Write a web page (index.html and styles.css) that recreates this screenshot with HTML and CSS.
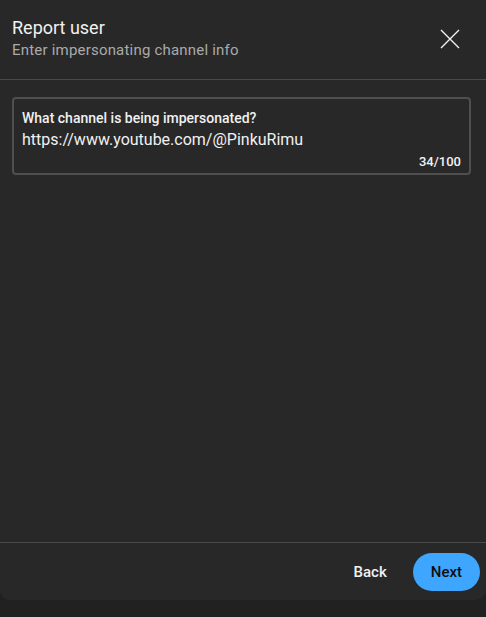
FILE: index.html
```html
<!DOCTYPE html>
<html>
<head>
<meta charset="utf-8">
<link rel="stylesheet" href="styles.css">
</head>
<body>
<div class="dialog">
  <div class="header">
    <div class="titles">
      <div class="title">Report user</div>
      <div class="subtitle">Enter impersonating channel info</div>
    </div>
    <button class="close" aria-label="Close">
      <svg width="20" height="20" viewBox="0 0 20 20"><path d="M1 1 L19 19 M19 1 L1 19" stroke="#f1f1f1" stroke-width="1.4" fill="none"/></svg>
    </button>
  </div>
  <div class="body">
    <div class="field">
      <div class="label">What channel is being impersonated?</div>
      <div class="value">https://www.youtube.com/@PinkuRimu</div>
      <div class="counter">34/100</div>
    </div>
  </div>
  <div class="footer">
    <button class="btn back">Back</button>
    <button class="btn next">Next</button>
  </div>
</div>
</body>
</html>
```
FILE: styles.css
```css
html, body {
  margin: 0;
  padding: 0;
  background: #212121;
  font-family: Roboto, "Liberation Sans", sans-serif;
}
.dialog {
  width: 486px;
  height: 600px;
  background: #282828;
  border-radius: 0 0 10px 10px;
  display: flex;
  flex-direction: column;
}
.header {
  display: flex;
  justify-content: space-between;
  align-items: flex-start;
  padding: 16px 0 19px 12px;
  border-bottom: 1px solid #4a4a4a;
}
.title {
  font-size: 18px;
  line-height: 24px;
  color: #f1f1f1;
}
.subtitle {
  font-size: 15px;
  line-height: 20px;
  letter-spacing: 0.2px;
  color: #aaaaaa;
}
.close {
  background: none;
  border: none;
  padding: 0;
  margin: 13px 26px 0 0;
  width: 20px;
  height: 20px;
  display: flex;
}
.body {
  flex: 1;
  padding: 17px 15px 0 12px;
}
.field {
  border: 2px solid #4f4f4f;
  border-radius: 4px;
  height: 78px;
  box-sizing: border-box;
  padding: 10px 8px 0 8px;
  display: flex;
  flex-direction: column;
}
.label {
  font-size: 14px;
  font-weight: 500;
  line-height: 18px;
  color: #f1f1f1;
}
.value {
  font-size: 16px;
  line-height: 22px;
  color: #f1f1f1;
  margin-top: 2px;
}
.counter {
  align-self: flex-end;
  font-size: 13px;
  font-weight: 500;
  line-height: 16px;
  color: #f1f1f1;
  margin-top: 3px;
}
.footer {
  display: flex;
  justify-content: flex-end;
  align-items: center;
  gap: 10px;
  height: 57px;
  padding-right: 6px;
  border-top: 1px solid #4a4a4a;
}
.btn {
  font-family: Roboto, "Liberation Sans", sans-serif;
  font-size: 15px;
  font-weight: 500;
  border: none;
  height: 38px;
  border-radius: 19px;
  padding: 0 16px;
}
.back {
  background: none;
  color: #f1f1f1;
}
.next {
  background: #3ea6ff;
  color: #0f0f0f;
  padding: 0 18px;
}
```
